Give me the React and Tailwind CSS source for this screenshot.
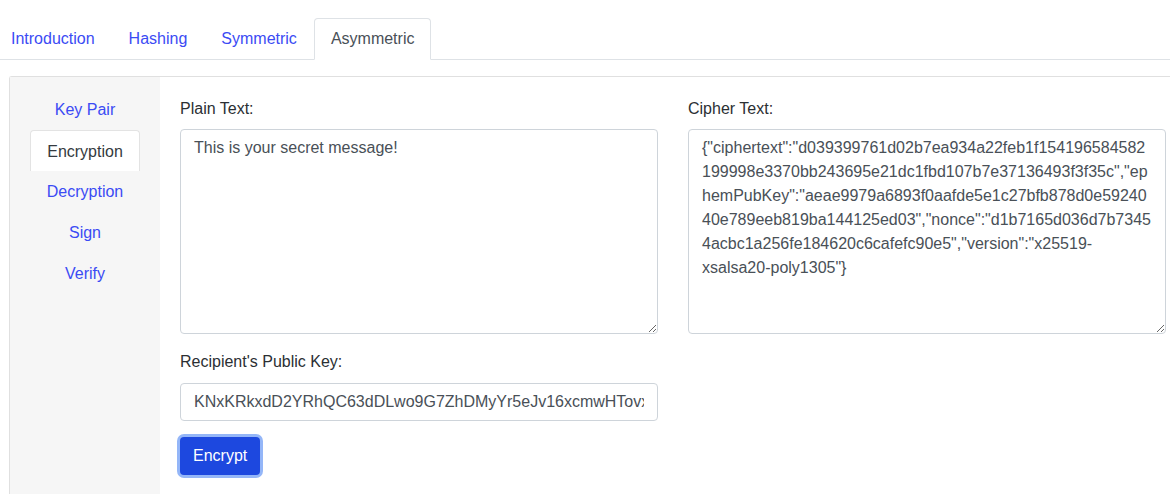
import React, { useState } from "react";

const topTabs = ["Introduction", "Hashing", "Symmetric", "Asymmetric"];
const sideTabs = ["Key Pair", "Encryption", "Decryption", "Sign", "Verify"];

const cipher =
  '{"ciphertext":"d039399761d02b7ea934a22feb1f154196584582199998e3370bb243695e21dc1fbd107b7e37136493f3f35c","ephemPubKey":"aeae9979a6893f0aafde5e1c27bfb878d0e5924040e789eeb819ba144125ed03","nonce":"d1b7165d036d7b73454acbc1a256fe184620c6cafefc90e5","version":"x25519-xsalsa20-poly1305"}';

const App = () => {
  const [plain, setPlain] = useState("This is your secret message!");
  const [pubKey, setPubKey] = useState(
    "KNxKRkxdD2YRhQC63dDLwo9G7ZhDMyYr5eJv16xcmwHTovxQ2"
  );

  return (
    <div
      className="w-[1170px] h-[494px] overflow-hidden bg-white text-[16px] text-[#212529]"
      style={{ fontFamily: '"Liberation Sans", Arial, sans-serif' }}
    >
      {/* Top tabs */}
      <div className="pt-[18px] border-b border-[#dee2e6]">
        <div className="flex items-start -ml-[6px]">
          {topTabs.map((t) => (
            <div
              key={t}
              className={
                t === "Asymmetric"
                  ? "px-[16px] pt-[8px] pb-[8px] leading-[24px] border border-[#dee2e6] border-b-white bg-white rounded-t-[4px] -mb-px text-[#495057]"
                  : "px-[16px] pt-[8px] pb-[7px] leading-[24px] border border-transparent text-[#3b4bf4]"
              }
            >
              {t}
            </div>
          ))}
        </div>
      </div>

      {/* Panel */}
      <div className="mt-[16px] ml-[9px] border-l border-t border-[#e0e0e0] rounded-tl-[3px] flex h-[420px]">
        {/* Sidebar */}
        <div className="w-[150px] bg-[#f6f6f6] px-[20px] pt-[12px] flex flex-col">
          {sideTabs.map((t) => (
            <div
              key={t}
              className={
                t === "Encryption"
                  ? "h-[41px] leading-[41px] text-center bg-white border border-b-0 border-[#e3e3e3] rounded-t-[4px] text-[#343a40]"
                  : "h-[41px] leading-[41px] text-center text-[#3b4bf4]"
              }
            >
              {t}
            </div>
          ))}
        </div>

        {/* Content */}
        <div className="pl-[20px] pt-[20px]">
          <div className="flex gap-[30px]">
            <div className="w-[478px]">
              <div className="leading-[24px] mb-[8px] text-[#2b2f33]">Plain Text:</div>
              <textarea
                value={plain}
                onChange={(e) => setPlain(e.target.value)}
                className="block w-[478px] h-[205px] border border-[#ced4da] rounded-[4px] px-[13px] py-[6px] leading-[24px] text-[#495057] outline-none"
              />
            </div>
            <div className="w-[478px]">
              <div className="leading-[24px] mb-[8px] text-[#2b2f33]">Cipher Text:</div>
              <textarea
                readOnly
                value={cipher}
                className="block w-[478px] h-[205px] border border-[#ced4da] rounded-[4px] px-[13px] py-[6px] leading-[24px] text-[#495057] outline-none"
              />
            </div>
          </div>

          <div className="w-[478px] mt-[16px]">
            <div className="leading-[24px] mb-[9px] text-[#2b2f33]">Recipient's Public Key:</div>
            <input
              value={pubKey}
              onChange={(e) => setPubKey(e.target.value)}
              className="block w-[478px] h-[38px] border border-[#ced4da] rounded-[4px] px-[13px] leading-[24px] text-[#495057] outline-none"
            />
          </div>

          <button className="mt-[16px] h-[38px] px-[13px] bg-[#1d48df] text-white rounded-[4px] ring-[3px] ring-[#94b6f8] leading-[24px]">
            Encrypt
          </button>
        </div>
      </div>
    </div>
  );
};

export default App;
